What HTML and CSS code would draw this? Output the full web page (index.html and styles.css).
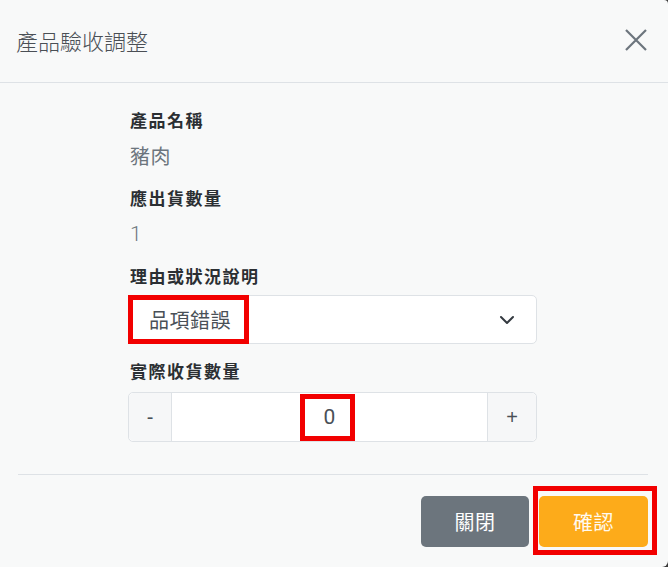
FILE: index.html
```html
<!DOCTYPE html>
<html lang="zh-Hant">
<head>
<meta charset="utf-8">
<title>產品驗收調整</title>
<link rel="stylesheet" href="styles.css">
</head>
<body>
<div class="modal">
  <header class="modal-header">
    <h1 class="modal-title">產品驗收調整</h1>
    <button class="close" type="button" aria-label="Close">
      <svg width="24" height="24" viewBox="0 0 24 24"><path d="M2 2 L22 22 M22 2 L2 22" stroke="#6c757d" stroke-width="2.2" fill="none"/></svg>
    </button>
  </header>
  <main class="modal-body">
    <div class="col">
      <div class="field">
        <div class="label">產品名稱</div>
        <div class="value">豬肉</div>
      </div>
      <div class="field">
        <div class="label">應出貨數量</div>
        <div class="value num">1</div>
      </div>
      <div class="field">
        <div class="label">理由或狀況說明</div>
        <div class="select">
          <span class="select-text">品項錯誤</span>
          <svg class="chevron" width="16" height="10" viewBox="0 0 16 10"><polyline points="2,2 8,8 14,2" fill="none" stroke="#343a40" stroke-width="2" stroke-linecap="round" stroke-linejoin="round"/></svg>
          <span class="annot annot-select"></span>
        </div>
      </div>
      <div class="field">
        <div class="label">實際收貨數量</div>
        <div class="input-group">
          <span class="addon addon-left">-</span>
          <div class="qty"><span class="num">0</span><span class="annot annot-qty"></span></div>
          <span class="addon addon-right">+</span>
        </div>
      </div>
    </div>
  </main>
  <footer class="modal-footer">
    <button class="btn btn-secondary" type="button">關閉</button>
    <div class="confirm-wrap">
      <button class="btn btn-warning" type="button">確認</button>
      <span class="annot annot-btn"></span>
    </div>
  </footer>
</div>
</body>
</html>
```

FILE: styles.css
```css
* { box-sizing: border-box; }
html, body { margin: 0; padding: 0; }
body {
  background: #3a3a3a;
  font-family: "Noto Sans CJK TC", "Noto Sans", sans-serif;
  color: #212529;
}
.modal {
  width: 668px;
  height: 567px;
  background: #f8f9f9;
  border-radius: 0 4px 6px 0;
  display: flex;
  flex-direction: column;
  overflow: hidden;
}
.modal-header {
  height: 83px;
  border-bottom: 1px solid #dee2e6;
  display: flex;
  align-items: center;
  justify-content: space-between;
  padding: 0 19px 0 16px;
  flex: none;
}
.modal-title {
  margin: 0 0 3px 0;
  font-size: 22px;
  font-weight: 300;
  color: #4a4f55;
  letter-spacing: 0;
  line-height: 30px;
}
.close {
  background: none;
  border: 0;
  padding: 0;
  width: 26px;
  height: 26px;
  display: flex;
  align-items: center;
  justify-content: center;
  margin-bottom: 3px;
}
.modal-body {
  flex: none;
  height: 391px;
  display: flex;
  justify-content: center;
  padding-top: 24px;
  padding-left: 1px;
}
.col {
  width: 409px;
  margin-right: 4px;
  display: flex;
  flex-direction: column;
}
.field { margin-bottom: 14px; }
.label {
  font-size: 17px;
  font-weight: 700;
  line-height: 26px;
  letter-spacing: 1.5px;
  color: #2b2f33;
  padding-left: 2px;
}
.value {
  margin-top: 8px;
  font-size: 20px;
  line-height: 30px;
  color: #6c757d;
  padding-left: 2px;
  letter-spacing: 0.5px;
}
.num { font-family: "Roboto", "Liberation Sans", sans-serif; }
.value.num { font-size: 21px; font-weight: 300; }
.select {
  position: relative;
  margin-top: 6px;
  height: 49px;
  background: #fff;
  border: 1px solid #dee2e6;
  border-radius: 5px;
  display: flex;
  align-items: center;
  justify-content: space-between;
  padding: 0 21px 0 20px;
}
.select-text {
  font-size: 20px;
  color: #495057;
  letter-spacing: 0.5px;
}
.chevron { margin-top: 1px; }
.input-group {
  margin-top: 8px;
  height: 50px;
  display: flex;
  border: 1px solid #dee2e6;
  border-radius: 5px;
  background: #fff;
  overflow: visible;
}
.addon {
  background: #f6f7f8;
  display: flex;
  align-items: center;
  justify-content: center;
  font-family: "Liberation Sans", sans-serif;
  font-size: 20px;
  color: #495057;
  flex: none;
}
.addon-left { width: 43px; border-right: 1px solid #dee2e6; border-radius: 5px 0 0 5px; }
.addon-right { width: 49px; border-left: 1px solid #dee2e6; border-radius: 0 5px 5px 0; }
.qty {
  position: relative;
  flex: 1;
  display: flex;
  align-items: center;
  justify-content: center;
  font-size: 21px;
  color: #495057;
}
.annot {
  position: absolute;
  border: 5px solid #f20000;
  pointer-events: none;
}
.annot-select { left: -1px; top: -1px; width: 121px; height: 49px; }
.annot-qty { left: 128px; top: 1px; width: 55px; height: 47px; }
.modal-footer {
  margin: 0 20px 0 18px;
  border-top: 1px solid #dee2e6;
  display: flex;
  justify-content: flex-end;
  align-items: flex-start;
  padding-top: 21px;
  gap: 10px;
}
.btn {
  width: 108px;
  height: 51px;
  border: 0;
  border-radius: 5px;
  font-family: "Noto Sans CJK TC", sans-serif;
  font-size: 20px;
  color: #fff;
  letter-spacing: 0.5px;
  padding: 0;
}
.btn-secondary { background: #6c757d; }
.confirm-wrap { position: relative; }
.btn-warning { background: #fdab1a; width: 109px; color: #fffaf0; }
.annot-btn { left: -6px; top: -10px; right: -9px; bottom: -8px; }
```
